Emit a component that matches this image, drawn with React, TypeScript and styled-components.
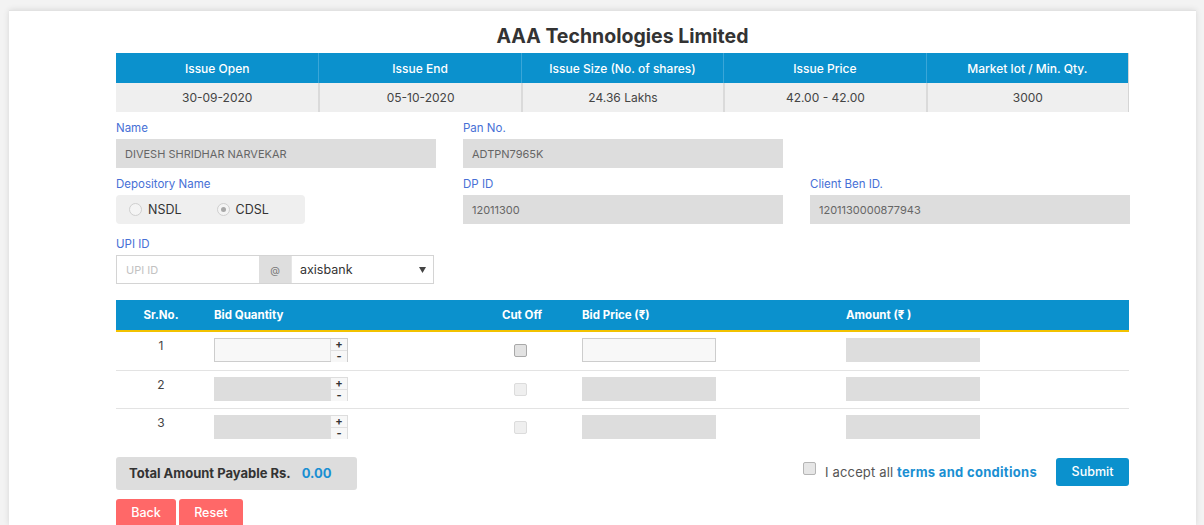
import React from "react";
import styled, { createGlobalStyle } from "styled-components";

const Global = createGlobalStyle`
  html, body { margin: 0; padding: 0; }
  body {
    background: #f3f3f3;
    font-family: "Inter", "Noto Sans", sans-serif;
    color: #444;
  }
  * { box-sizing: border-box; }
`;

const Card = styled.div`
  margin: 10px 8px 0 9px;
  background: #fff;
  box-shadow: 0 0 6px rgba(0, 0, 0, 0.12);
  border-top: 1px solid #e2e2e2;
  height: 515px;
  overflow: hidden;
  padding: 14px 0 0 107px;
`;

const Content = styled.div`
  width: 1013px;
`;

const Title = styled.h1`
  margin: 0 0 6px;
  text-align: center;
  font-size: 19.5px;
  font-weight: 700;
  color: #333;
  line-height: 22px;
`;

const InfoGrid = styled.div`
  display: grid;
  grid-template-columns: repeat(5, 1fr);
  border-right: 1px solid #d5d5d5;
`;

const InfoHead = styled.div`
  background: #0b91cd;
  color: #fff;
  font-size: 12px;
  font-weight: 500;
  height: 30px;
  display: flex;
  align-items: center;
  justify-content: center;
  border-left: 1px solid #3aa6d8;
  &:first-child { border-left: none; }
`;

const InfoCell = styled.div<{ $first?: boolean }>`
  background: #efefef;
  color: #444;
  font-size: 12px;
  height: 29px;
  display: flex;
  align-items: center;
  justify-content: center;
  border-left: ${(p) => (p.$first ? "none" : "2px solid #dadada")};
`;

const FormGrid = styled.div`
  display: grid;
  grid-template-columns: 320px 320px 320px;
  column-gap: 27px;
  margin-top: 9px;
`;

const Field = styled.div<{ $span?: number; $gapTop?: number }>`
  display: flex;
  flex-direction: column;
  margin-bottom: 9px;
  margin-top: ${(p) => p.$gapTop ?? 0}px;
  grid-column: span ${(p) => p.$span ?? 1};
`;

const Label = styled.label`
  font-size: 11.5px;
  color: #4770d6;
  line-height: 14px;
  margin-bottom: 4px;
`;

const ReadBox = styled.div<{ $w?: number }>`
  height: 29px;
  width: ${(p) => (p.$w ? `${p.$w}px` : "auto")};
  background: #dddddd;
  color: #666;
  font-size: 11px;
  display: flex;
  align-items: center;
  padding: 0 9px;
  text-transform: uppercase;
`;

const RadioGroup = styled.div`
  width: 189px;
  height: 29px;
  background: #efefef;
  border-radius: 4px;
  display: flex;
  align-items: center;
  gap: 35px;
  padding-left: 13px;
`;

const RadioItem = styled.span`
  display: flex;
  align-items: center;
  gap: 6px;
  font-size: 12.5px;
  color: #333;
`;

const RadioDot = styled.span<{ $on?: boolean }>`
  width: 13px;
  height: 13px;
  border-radius: 50%;
  border: 1px solid #cfcfcf;
  background: #f4f4f4;
  display: inline-flex;
  align-items: center;
  justify-content: center;
  &::after {
    content: "";
    width: 5px;
    height: 5px;
    border-radius: 50%;
    background: ${(p) => (p.$on ? "#a8a8a8" : "transparent")};
  }
`;

const UpiGroup = styled.div`
  display: flex;
  width: 318px;
  height: 29px;
  border: 1px solid #d4d4d4;
`;

const UpiInput = styled.div`
  width: 142px;
  display: flex;
  align-items: center;
  padding-left: 9px;
  font-size: 11px;
  color: #c2c2c2;
  background: #fff;
`;

const AtAddon = styled.div`
  width: 32px;
  background: #dedede;
  display: flex;
  align-items: center;
  justify-content: center;
  font-size: 10px;
  color: #777;
`;

const SelectBox = styled.div`
  flex: 1;
  display: flex;
  align-items: center;
  justify-content: space-between;
  padding: 0 7px 0 8px;
  font-size: 12.5px;
  color: #333;
  background: #fff;
  border-left: 1px solid #e6e6e6;
`;

const BidTable = styled.div`
  margin-top: 7px;
`;

const BidRow = styled.div<{ $head?: boolean }>`
  display: grid;
  grid-template-columns: 90px 264px 104px 264px 1fr;
  ${(p) =>
    p.$head
      ? `
    background: #0b91cd;
    height: 32px;
    border-bottom: 2px solid #f2c200;
    color: #fff;
    font-weight: 700;
    font-size: 11.5px;
    align-items: center;
  `
      : `
    height: 38.5px;
    border-bottom: 1px solid #e3e3e3;
    padding-top: 6px;
    align-items: start;
    &:last-child { border-bottom: none; }
  `}
`;

const BidCell = styled.div<{ $center?: boolean }>`
  padding-left: ${(p) => (p.$center ? "0" : "8px")};
  display: flex;
  justify-content: ${(p) => (p.$center ? "center" : "flex-start")};
`;

const SrNum = styled.div`
  width: 100%;
  text-align: center;
  font-size: 12px;
  color: #444;
`;

const Spinner = styled.div<{ $off?: boolean }>`
  width: 134px;
  height: 24px;
  display: flex;
  background: ${(p) => (p.$off ? "#dddddd" : "#f8f8f8")};
  border: 1px solid ${(p) => (p.$off ? "#dddddd" : "#cdcdcd")};
`;

const SpinField = styled.div`
  flex: 1;
`;

const SpinButtons = styled.div`
  width: 17px;
  display: flex;
  flex-direction: column;
  border-left: 1px solid #e0e0e0;
`;

const SpinBtn = styled.span<{ $top?: boolean }>`
  flex: 1;
  display: flex;
  align-items: center;
  justify-content: center;
  font-size: 11px;
  font-weight: 700;
  line-height: 1;
  color: #333;
  background: #f7f7f7;
  border-bottom: ${(p) => (p.$top ? "1px solid #e0e0e0" : "none")};
`;

const Check = styled.span<{ $off?: boolean }>`
  display: inline-block;
  width: 13px;
  height: 13px;
  border-radius: 2px;
  margin: 6px 4px 0 0;
  background: ${(p) => (p.$off ? "#efefef" : "#e2e2e2")};
  border: 1px solid ${(p) => (p.$off ? "#dcdcdc" : "#a9a9a9")};
`;

const PriceBox = styled.div<{ $off?: boolean }>`
  width: 134px;
  height: 24px;
  background: ${(p) => (p.$off ? "#dddddd" : "#f8f8f8")};
  border: 1px solid ${(p) => (p.$off ? "#dddddd" : "#cdcdcd")};
`;

const Footer = styled.div`
  display: flex;
  justify-content: space-between;
  align-items: flex-start;
  margin-top: 9px;
`;

const LeftCol = styled.div`
  display: flex;
  flex-direction: column;
  gap: 9px;
`;

const TotalBox = styled.div`
  width: 241px;
  height: 33px;
  background: #dddddd;
  border-radius: 3px;
  display: flex;
  align-items: center;
  padding-left: 13px;
  font-size: 13px;
  font-weight: 700;
  color: #333;
`;

const TotalValue = styled.span`
  color: #1a8fd2;
  margin-left: 11px;
`;

const ButtonRow = styled.div`
  display: flex;
  gap: 3px;
`;

const Btn = styled.button<{ $w: number; $tone: "red" | "blue" }>`
  width: ${(p) => p.$w}px;
  height: 28px;
  border: none;
  border-radius: 3px;
  background: ${(p) => (p.$tone === "red" ? "#ff6868" : "#0b91cd")};
  color: #fff;
  font-family: inherit;
  font-size: 12.5px;
  font-weight: 500;
  cursor: pointer;
`;

const AcceptRow = styled.div`
  display: flex;
  align-items: center;
  padding-top: 1px;
`;

const Accept = styled.span`
  display: flex;
  align-items: center;
  font-size: 13px;
  color: #555;
  margin-right: 19px;
  gap: 9px;
  letter-spacing: 0.15px;
`;

const AcceptBox = styled.span`
  width: 13px;
  height: 13px;
  border-radius: 2px;
  background: #e6e6e6;
  border: 1px solid #b5b5b5;
  margin-top: -7px;
`;

const Terms = styled.b`
  color: #1a8fd2;
  font-weight: 700;
  letter-spacing: 0.3px;
`;

const CaretIcon = () => (
  <svg width="7" height="6" viewBox="0 0 7 6">
    <path d="M0 0 H7 L3.5 6 Z" fill="#444" />
  </svg>
);

const infoHeads = [
  "Issue Open",
  "Issue End",
  "Issue Size (No. of shares)",
  "Issue Price",
  "Market lot / Min. Qty.",
];
const infoVals = ["30-09-2020", "05-10-2020", "24.36 Lakhs", "42.00 - 42.00", "3000"];

export default function App() {
  return (
    <>
      <Global />
      <Card>
        <Content>
          <Title>AAA Technologies Limited</Title>
          <InfoGrid>
            {infoHeads.map((h) => (
              <InfoHead key={h}>{h}</InfoHead>
            ))}
            {infoVals.map((v, i) => (
              <InfoCell key={v} $first={i === 0}>
                {v}
              </InfoCell>
            ))}
          </InfoGrid>

          <FormGrid>
            <Field>
              <Label>Name</Label>
              <ReadBox>Divesh Shridhar Narvekar</ReadBox>
            </Field>
            <Field $span={2}>
              <Label>Pan No.</Label>
              <ReadBox $w={320}>ADTPN7965K</ReadBox>
            </Field>
            <Field>
              <Label>Depository Name</Label>
              <RadioGroup>
                <RadioItem>
                  <RadioDot />
                  NSDL
                </RadioItem>
                <RadioItem>
                  <RadioDot $on />
                  CDSL
                </RadioItem>
              </RadioGroup>
            </Field>
            <Field>
              <Label>DP ID</Label>
              <ReadBox>12011300</ReadBox>
            </Field>
            <Field>
              <Label>Client Ben ID.</Label>
              <ReadBox>1201130000877943</ReadBox>
            </Field>
            <Field $span={3} $gapTop={4}>
              <Label>UPI ID</Label>
              <UpiGroup>
                <UpiInput>UPI ID</UpiInput>
                <AtAddon>@</AtAddon>
                <SelectBox>
                  axisbank
                  <CaretIcon />
                </SelectBox>
              </UpiGroup>
            </Field>
          </FormGrid>

          <BidTable>
            <BidRow $head>
              <BidCell $center>Sr.No.</BidCell>
              <BidCell>Bid Quantity</BidCell>
              <BidCell $center>Cut Off</BidCell>
              <BidCell>Bid Price (₹)</BidCell>
              <BidCell>Amount (₹ )</BidCell>
            </BidRow>
            {[1, 2, 3].map((n) => {
              const off = n > 1;
              return (
                <BidRow key={n}>
                  <BidCell $center>
                    <SrNum>{n}</SrNum>
                  </BidCell>
                  <BidCell>
                    <Spinner $off={off}>
                      <SpinField />
                      <SpinButtons>
                        <SpinBtn $top>+</SpinBtn>
                        <SpinBtn>-</SpinBtn>
                      </SpinButtons>
                    </Spinner>
                  </BidCell>
                  <BidCell $center>
                    <Check $off={off} />
                  </BidCell>
                  <BidCell>
                    <PriceBox $off={off} />
                  </BidCell>
                  <BidCell>
                    <PriceBox $off />
                  </BidCell>
                </BidRow>
              );
            })}
          </BidTable>

          <Footer>
            <LeftCol>
              <TotalBox>
                Total Amount Payable Rs.
                <TotalValue>0.00</TotalValue>
              </TotalBox>
              <ButtonRow>
                <Btn $w={60} $tone="red">Back</Btn>
                <Btn $w={64} $tone="red">Reset</Btn>
              </ButtonRow>
            </LeftCol>
            <AcceptRow>
              <Accept>
                <AcceptBox />
                <span>
                  I accept all <Terms>terms and conditions</Terms>
                </span>
              </Accept>
              <Btn $w={73} $tone="blue">Submit</Btn>
            </AcceptRow>
          </Footer>
        </Content>
      </Card>
    </>
  );
}
